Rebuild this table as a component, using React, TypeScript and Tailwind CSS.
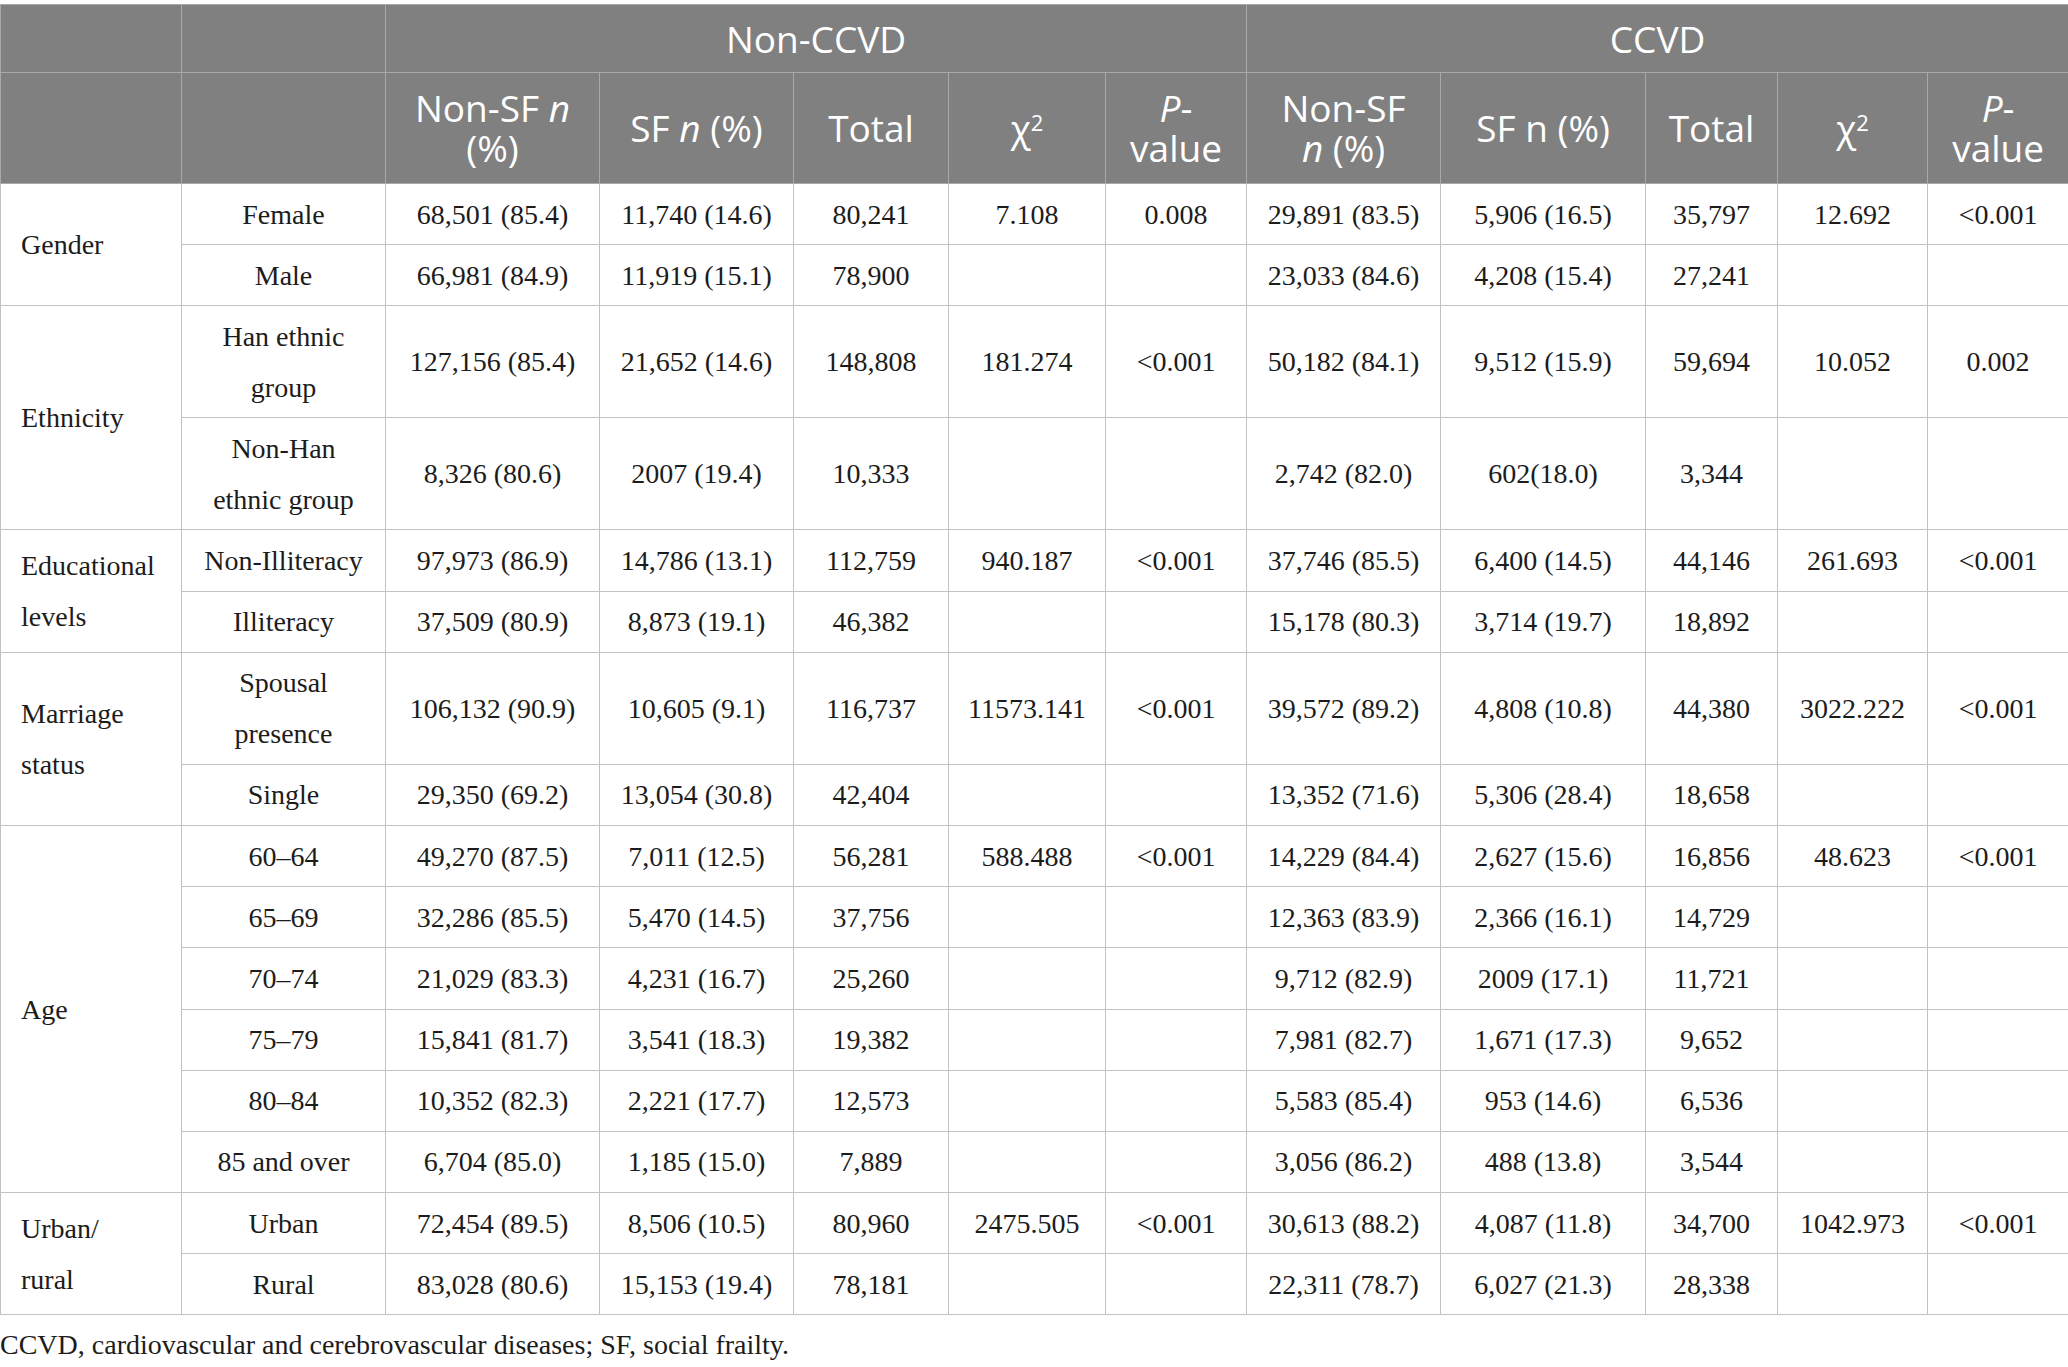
import React from "react";

type Row = { label: React.ReactNode; tall?: boolean; vals: string[] };
type Group = { cat: React.ReactNode; rows: Row[] };

const groups: Group[] = [
  {
    cat: "Gender",
    rows: [
      { label: "Female", vals: ["68,501 (85.4)", "11,740 (14.6)", "80,241", "7.108", "0.008", "29,891 (83.5)", "5,906 (16.5)", "35,797", "12.692", "<0.001"] },
      { label: "Male", vals: ["66,981 (84.9)", "11,919 (15.1)", "78,900", "", "", "23,033 (84.6)", "4,208 (15.4)", "27,241", "", ""] },
    ],
  },
  {
    cat: "Ethnicity",
    rows: [
      { label: <>Han ethnic<br />group</>, tall: true, vals: ["127,156 (85.4)", "21,652 (14.6)", "148,808", "181.274", "<0.001", "50,182 (84.1)", "9,512 (15.9)", "59,694", "10.052", "0.002"] },
      { label: <>Non-Han<br />ethnic group</>, tall: true, vals: ["8,326 (80.6)", "2007 (19.4)", "10,333", "", "", "2,742 (82.0)", "602(18.0)", "3,344", "", ""] },
    ],
  },
  {
    cat: <>Educational<br />levels</>,
    rows: [
      { label: "Non-Illiteracy", vals: ["97,973 (86.9)", "14,786 (13.1)", "112,759", "940.187", "<0.001", "37,746 (85.5)", "6,400 (14.5)", "44,146", "261.693", "<0.001"] },
      { label: "Illiteracy", vals: ["37,509 (80.9)", "8,873 (19.1)", "46,382", "", "", "15,178 (80.3)", "3,714 (19.7)", "18,892", "", ""] },
    ],
  },
  {
    cat: <>Marriage<br />status</>,
    rows: [
      { label: <>Spousal<br />presence</>, tall: true, vals: ["106,132 (90.9)", "10,605 (9.1)", "116,737", "11573.141", "<0.001", "39,572 (89.2)", "4,808 (10.8)", "44,380", "3022.222", "<0.001"] },
      { label: "Single", vals: ["29,350 (69.2)", "13,054 (30.8)", "42,404", "", "", "13,352 (71.6)", "5,306 (28.4)", "18,658", "", ""] },
    ],
  },
  {
    cat: "Age",
    rows: [
      { label: "60–64", vals: ["49,270 (87.5)", "7,011 (12.5)", "56,281", "588.488", "<0.001", "14,229 (84.4)", "2,627 (15.6)", "16,856", "48.623", "<0.001"] },
      { label: "65–69", vals: ["32,286 (85.5)", "5,470 (14.5)", "37,756", "", "", "12,363 (83.9)", "2,366 (16.1)", "14,729", "", ""] },
      { label: "70–74", vals: ["21,029 (83.3)", "4,231 (16.7)", "25,260", "", "", "9,712 (82.9)", "2009 (17.1)", "11,721", "", ""] },
      { label: "75–79", vals: ["15,841 (81.7)", "3,541 (18.3)", "19,382", "", "", "7,981 (82.7)", "1,671 (17.3)", "9,652", "", ""] },
      { label: "80–84", vals: ["10,352 (82.3)", "2,221 (17.7)", "12,573", "", "", "5,583 (85.4)", "953 (14.6)", "6,536", "", ""] },
      { label: "85 and over", vals: ["6,704 (85.0)", "1,185 (15.0)", "7,889", "", "", "3,056 (86.2)", "488 (13.8)", "3,544", "", ""] },
    ],
  },
  {
    cat: <>Urban/<br />rural</>,
    rows: [
      { label: "Urban", vals: ["72,454 (89.5)", "8,506 (10.5)", "80,960", "2475.505", "<0.001", "30,613 (88.2)", "4,087 (11.8)", "34,700", "1042.973", "<0.001"] },
      { label: "Rural", vals: ["83,028 (80.6)", "15,153 (19.4)", "78,181", "", "", "22,311 (78.7)", "6,027 (21.3)", "28,338", "", ""] },
    ],
  },
];

const th = "border border-[#a8a8a8] bg-[#808080] text-white font-normal text-center align-middle text-[37px] leading-[40px] p-0";
const td = "border border-[#c2c2c2] text-center align-middle p-0 leading-[51px]";

export default function App() {
  return (
    <div className="w-[2068px] h-[1367px] overflow-hidden bg-white pt-[4px] font-['Liberation_Serif',serif] text-[28px] text-[#1c1c1c]">
      <table className="w-[2068px] table-fixed border-collapse">
        <colgroup>
          <col className="w-[181px]" />
          <col className="w-[204px]" />
          <col className="w-[214px]" />
          <col className="w-[194px]" />
          <col className="w-[155px]" />
          <col className="w-[157px]" />
          <col className="w-[141px]" />
          <col className="w-[194px]" />
          <col className="w-[205px]" />
          <col className="w-[132px]" />
          <col className="w-[150px]" />
          <col className="w-[141px]" />
        </colgroup>
        <thead className="font-['Open_Sans',sans-serif]">
          <tr className="h-[68px]">
            <th className={th}></th>
            <th className={th}></th>
            <th className={th} colSpan={5}>Non-CCVD</th>
            <th className={th} colSpan={5}>CCVD</th>
          </tr>
          <tr className="h-[111px]">
            <th className={th}></th>
            <th className={th}></th>
            <th className={th}>Non-SF <i>n</i><br />(%)</th>
            <th className={th}>SF <i>n</i> (%)</th>
            <th className={th}>Total</th>
            <th className={th}>χ<sup className="text-[22px]">2</sup></th>
            <th className={th}><i>P</i>-<br />value</th>
            <th className={th}>Non-SF<br /><i>n</i> (%)</th>
            <th className={th}>SF n (%)</th>
            <th className={th}>Total</th>
            <th className={th}>χ<sup className="text-[22px]">2</sup></th>
            <th className={th}><i>P</i>-<br />value</th>
          </tr>
        </thead>
        <tbody>
          {groups.map((g, gi) =>
            g.rows.map((r, ri) => (
              <tr key={`${gi}-${ri}`} className={r.tall ? "h-[112px]" : "h-[61.2px]"}>
                {ri === 0 && (
                  <td rowSpan={g.rows.length} className={`${td} text-left pl-[20px] leading-[50px]`}>
                    {g.cat}
                  </td>
                )}
                <td className={td}>{r.label}</td>
                {r.vals.map((v, vi) => (
                  <td key={vi} className={td}>{v}</td>
                ))}
              </tr>
            ))
          )}
        </tbody>
      </table>
      <p className="mt-[14px] leading-[32px]">CCVD, cardiovascular and cerebrovascular diseases; SF, social frailty.</p>
    </div>
  );
}
